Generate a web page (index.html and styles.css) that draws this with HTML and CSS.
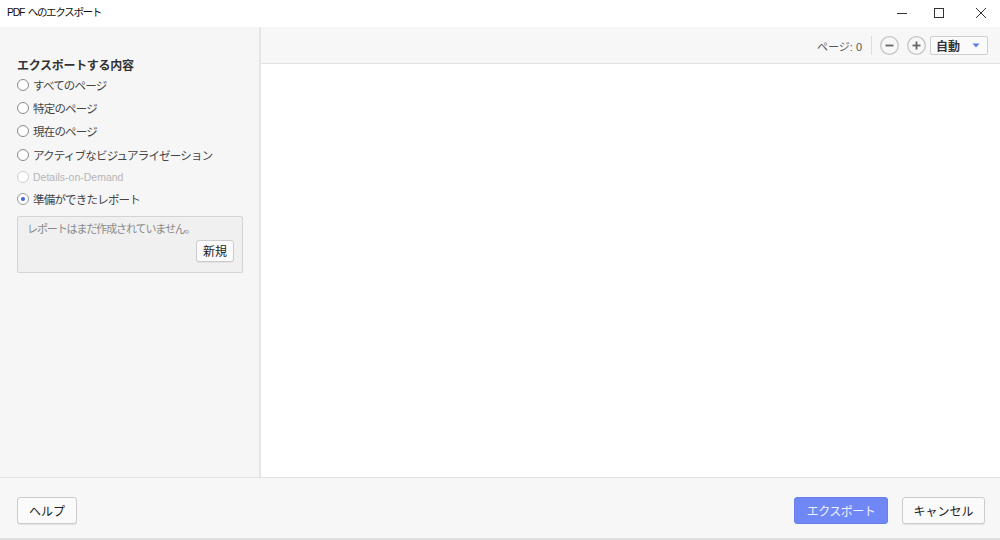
FILE: index.html
```html
<!DOCTYPE html>
<html lang="ja">
<head>
<meta charset="utf-8">
<title>PDF へのエクスポート</title>
<link rel="stylesheet" href="styles.css">
</head>
<body>
<div class="window">
  <div class="titlebar">
    <div class="title">PDF へのエクスポート</div>
    <div class="controls">
      <span class="ctl"><svg width="12" height="12" viewBox="0 0 12 12"><line x1="1" y1="6.5" x2="11" y2="6.5" stroke="#333" stroke-width="1"/></svg></span>
      <span class="ctl"><svg width="12" height="12" viewBox="0 0 12 12"><rect x="1.5" y="1.5" width="9" height="9" fill="none" stroke="#333" stroke-width="1"/></svg></span>
      <span class="ctl"><svg width="12" height="12" viewBox="0 0 12 12"><path d="M1 1L11 11M11 1L1 11" stroke="#333" stroke-width="1"/></svg></span>
    </div>
  </div>
  <div class="main">
    <div class="sidebar">
      <div class="heading">エクスポートする内容</div>
      <ul class="options">
        <li class="opt"><span class="radio"></span>すべてのページ</li>
        <li class="opt"><span class="radio"></span>特定のページ</li>
        <li class="opt"><span class="radio"></span>現在のページ</li>
        <li class="opt"><span class="radio"></span>アクティブなビジュアライゼーション</li>
        <li class="opt disabled"><span class="radio"></span>Details-on-Demand</li>
        <li class="opt"><span class="radio checked"></span>準備ができたレポート</li>
      </ul>
      <div class="reportbox">
        <div class="empty">レポートはまだ作成されていません。</div>
        <div class="boxrow"><button class="btn small">新規</button></div>
      </div>
    </div>
    <div class="preview">
      <div class="toolbar">
        <span class="pages">ページ: 0</span>
        <span class="sep"></span>
        <span class="zoombtn"><svg width="19" height="19" viewBox="0 0 19 19"><circle cx="9.5" cy="9.5" r="8.8" fill="#f7f7f7" stroke="#c4c4c4" stroke-width="1.3"/><line x1="5.5" y1="9.5" x2="13.5" y2="9.5" stroke="#666" stroke-width="1.8"/></svg></span>
        <span class="zoombtn"><svg width="19" height="19" viewBox="0 0 19 19"><circle cx="9.5" cy="9.5" r="8.8" fill="#f7f7f7" stroke="#c4c4c4" stroke-width="1.3"/><line x1="5.5" y1="9.5" x2="13.5" y2="9.5" stroke="#666" stroke-width="1.8"/><line x1="9.5" y1="5.5" x2="9.5" y2="13.5" stroke="#666" stroke-width="1.8"/></svg></span>
        <span class="select"><span class="selval">自動</span><svg width="8" height="5" viewBox="0 0 8 5"><path d="M0.5 0.5H7.5L4 4.5Z" fill="#5b7de8"/></svg></span>
      </div>
      <div class="canvas"></div>
    </div>
  </div>
  <div class="footer">
    <button class="btn help">ヘルプ</button>
    <div class="actions">
      <button class="btn primary">エクスポート</button>
      <button class="btn cancel">キャンセル</button>
    </div>
  </div>
</div>
</body>
</html>
```

FILE: styles.css
```css
* { box-sizing: border-box; }
html, body { margin: 0; padding: 0; }
body {
  width: 1000px;
  height: 540px;
  overflow: hidden;
  background: #fff;
  font-family: "Liberation Sans", "Noto Sans CJK JP", sans-serif;
  font-size: 12px;
  color: #333;
}
.window {
  display: flex;
  flex-direction: column;
  height: 540px;
}
.titlebar {
  height: 27px;
  display: flex;
  align-items: center;
  justify-content: space-between;
  background: #fff;
  padding-left: 7px;
}
.title {
  font-size: 10.5px;
  letter-spacing: -1.3px;
  word-spacing: 2px;
  color: #111;
  line-height: 1;
  margin-top: -2px;
}
.controls {
  display: flex;
  height: 27px;
  align-items: center;
}
.ctl {
  width: 40px;
  display: flex;
  justify-content: center;
  margin-top: -2px;
}
.controls .ctl:nth-child(1) { margin-right: -3px; }
.controls .ctl:nth-child(3) { margin-left: 1px; margin-right: -1px; width: 41px; }
.main {
  display: flex;
  height: 450px;
}
.sidebar {
  width: 261px;
  background: #f6f6f6;
  border-right: 2px solid #e6e6e6;
  padding: 31px 17px 0 17px;
}
.heading {
  font-weight: bold;
  font-size: 12px;
  letter-spacing: -0.3px;
  color: #333;
  line-height: 16px;
}
.options {
  list-style: none;
  margin: 0;
  padding: 0;
}
.opt {
  display: flex;
  align-items: center;
  height: 23.4px;
  color: #444;
  font-size: 11.5px;
  letter-spacing: -0.8px;
}
.opt:first-child { height: 22.4px; }
.opt:nth-child(5), .opt:nth-child(6) { height: 21.5px; }
.radio {
  width: 12px;
  height: 12px;
  border-radius: 50%;
  border: 1px solid #8a8a8a;
  background: #fff;
  margin-right: 4px;
  flex: none;
  position: relative;
}
.opt.disabled { color: #b5b5b5; letter-spacing: 0; font-size: 10.5px; }
.opt.disabled .radio { border-color: #cfcfcf; }
.radio.checked { border-color: #9a9a9a; }
.radio.checked::after {
  content: "";
  position: absolute;
  left: 3px;
  top: 3px;
  width: 4px;
  height: 4px;
  border-radius: 50%;
  background: #3b66e0;
}
.reportbox {
  margin-top: 6px;
  width: 226px;
  height: 57px;
  border: 1px solid #d4d4d4;
  border-radius: 2px;
  background: #f0f0f0;
  padding: 4px 9px 0 9px;
}
.empty {
  color: #8a8a8a;
  font-size: 11px;
  letter-spacing: -1.1px;
  line-height: 16px;
}
.boxrow {
  display: flex;
  justify-content: flex-end;
  margin-top: 3px;
}
.btn {
  font-family: inherit;
  font-size: 12px;
  color: #222;
  background: #fafafa;
  border: 1px solid #cccccc;
  border-radius: 3px;
  box-shadow: 0 1px 0 #e2e2e2;
  padding: 0;
  cursor: pointer;
}
.btn.small {
  width: 38px;
  height: 22px;
  margin-right: -1px;
}
.preview {
  flex: 1;
  display: flex;
  flex-direction: column;
}
.toolbar {
  height: 37px;
  background: #f7f7f7;
  border-bottom: 1px solid #e2e2e2;
  display: flex;
  align-items: center;
  justify-content: flex-end;
  padding-right: 12px;
  padding-top: 1px;
}
.pages {
  color: #555;
  font-size: 11px;
  margin-right: 9px;
}
.sep {
  width: 1px;
  height: 19px;
  background: #dcdcdc;
  margin-right: 8px;
}
.zoombtn {
  display: flex;
  margin-right: 8px;
}
.zoombtn + .zoombtn { margin-right: 4px; }
.select {
  width: 58px;
  height: 19px;
  background: #fafafa;
  border: 1px solid #cfcfcf;
  border-radius: 2px;
  display: flex;
  align-items: center;
  justify-content: space-between;
  padding: 0 7px 0 5px;
}
.selval {
  font-size: 12px;
  font-weight: bold;
  color: #333;
}
.canvas {
  flex: 1;
  background: #fff;
}
.footer {
  height: 63px;
  background: #f7f7f7;
  border-top: 1px solid #e0e0e0;
  border-bottom: 2px solid #e0e0e0;
  display: flex;
  align-items: center;
  justify-content: space-between;
  padding: 4px 15px 0 17px;
}
.btn.help {
  width: 60px;
  height: 27px;
}
.actions {
  display: flex;
  gap: 14px;
}
.btn.primary {
  width: 94px;
  height: 27px;
  background: #7088f6;
  border-color: #6680ee;
  color: #eef1ff;
  box-shadow: none;
  letter-spacing: -0.5px;
}
.btn.cancel {
  width: 83px;
  height: 27px;
}
```
